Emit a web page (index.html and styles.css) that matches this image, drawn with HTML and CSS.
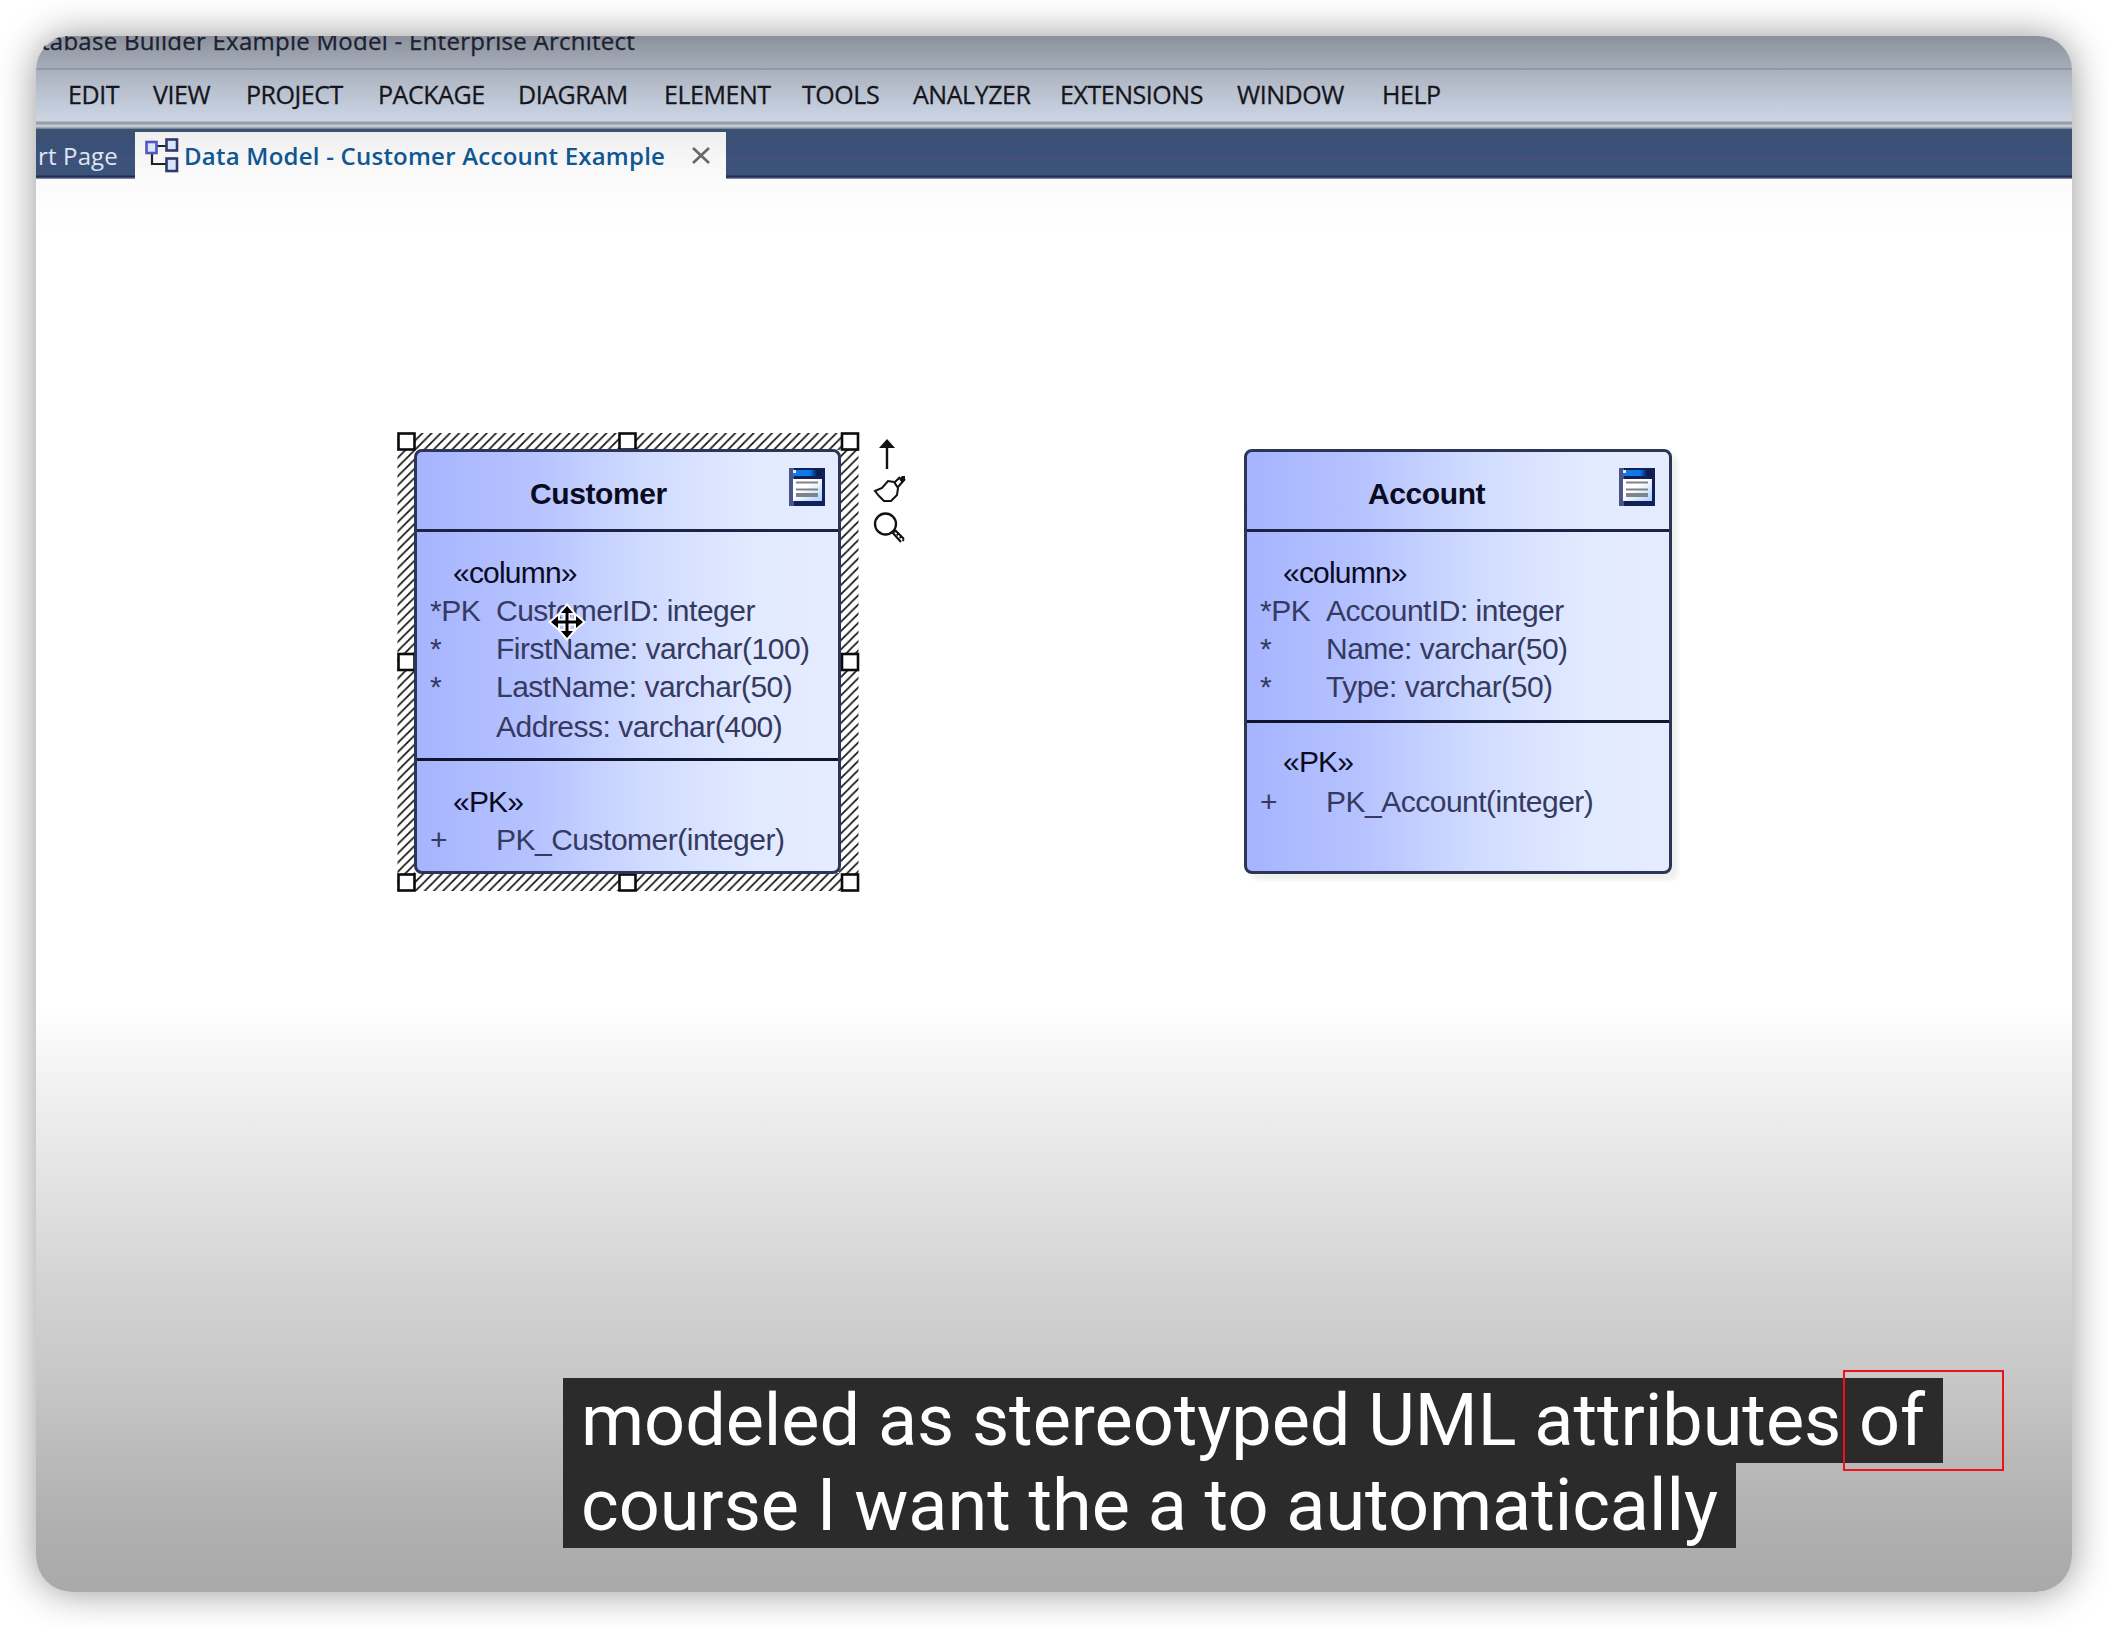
FILE: index.html
```html
<!DOCTYPE html>
<html lang="en">
<head>
<meta charset="utf-8">
<title>Database Builder Example Model - Enterprise Architect</title>
<link rel="stylesheet" href="styles.css">
</head>
<body>
<svg class="defs" width="0" height="0" aria-hidden="true">
  <defs>
    <linearGradient id="bar" x1="0" x2="1" y1="0" y2="0"><stop offset="0" stop-color="#1a78d8"/><stop offset=".6" stop-color="#0a7af0"/><stop offset=".85" stop-color="#0b1c50"/></linearGradient>
    <linearGradient id="sheet" x1="0" x2="1" y1="0" y2="1"><stop offset=".4" stop-color="#fff"/><stop offset="1" stop-color="#a9d0ff"/></linearGradient>
    <pattern id="hatch" width="9.2" height="9.2" patternUnits="userSpaceOnUse"><path d="M-2.3 2.3L2.3-2.3M0 9.2L9.2 0M6.900 11.500L11.500 6.900" stroke="#111" stroke-width="1.700"/></pattern>
    <symbol id="table-icon" viewBox="0 0 36 38">
      <rect width="36" height="38" fill="#12205a"/>
      <rect width="5" height="38" fill="#4b5488"/>
      <rect x="4" y="2" width="28" height="6" fill="url(#bar)"/>
      <rect x="4" y="2" width="3" height="3" fill="#d7ecff"/>
      <rect x="4" y="11" width="29" height="22" fill="url(#sheet)"/>
      <path d="M7 14.500h22M7 21.500h22" stroke="#808488" stroke-width="2"/>
      <path d="M7 27h22" stroke="#808488" stroke-width="4"/>
    </symbol>
  </defs>
</svg>
<main class="frame">
  <header class="titlebar"><span class="title">tabase Builder Example Model - Enterprise Architect</span></header>
  <nav class="menu">
    <span>EDIT</span><span>VIEW</span><span>PROJECT</span><span>PACKAGE</span><span>DIAGRAM</span><span>ELEMENT</span><span>TOOLS</span><span>ANALYZER</span><span>EXTENSIONS</span><span>WINDOW</span><span>HELP</span>
  </nav>
  <div class="tabs">
    <div class="tab start">rt Page</div>
    <div class="tab active">
      <svg class="tab-icon" width="34" height="35" viewBox="0 0 34 35">
        <path d="M11 8h10M7 14v12h14" fill="none" stroke="#222" stroke-width="2.200"/>
        <g fill="#d9e4ff" stroke="#30386c" stroke-width="2.600"><rect x="1.500" y="4" width="10" height="11" stroke="#5058c0"/><rect x="21.500" y="1.500" width="10.500" height="11"/><rect x="21.500" y="20.500" width="10.500" height="12.500"/></g>
      </svg>
      <span class="tab-name">Data Model - Customer Account Example</span>
      <svg class="close" width="20" height="17" viewBox="0 0 20 17"><path d="M2 1l16 15M18 1L2 16" stroke="#666" stroke-width="2.600"/></svg>
    </div>
  </div>
  <section class="canvas">
    <svg class="selection" width="464" height="460" viewBox="0 0 464 460">
      <path fill="url(#hatch)" fill-rule="evenodd" d="M1.500 1H462.500V459H1.500ZM19 18V441H443V18Z"/>
      <g class="handles">
        <rect x="2.500" y="1.500" width="16" height="16"/><rect x="223.500" y="1.500" width="16" height="16"/><rect x="446" y="1.500" width="16" height="16"/>
        <rect x="2.500" y="222" width="16" height="16"/><rect x="446" y="222" width="16" height="16"/>
        <rect x="2.500" y="442.500" width="16" height="16"/><rect x="223.500" y="442.500" width="16" height="16"/><rect x="446" y="442.500" width="16" height="16"/>
      </g>
    </svg>
    <article class="entity customer">
      <h2><span>Customer</span><svg class="entity-icon" width="36" height="38"><use href="#table-icon"/></svg></h2>
      <div class="part columns">
        <div class="stereo">«column»</div>
        <div class="row"><i>*PK</i><span>CustomerID: integer</span></div>
        <div class="row"><i>*</i><span>FirstName: varchar(100)</span></div>
        <div class="row"><i>*</i><span>LastName: varchar(50)</span></div>
        <div class="row last"><i></i><span>Address: varchar(400)</span></div>
      </div>
      <div class="part keys">
        <div class="stereo">«PK»</div>
        <div class="row"><i>+</i><span>PK_Customer(integer)</span></div>
      </div>
    </article>
    <svg class="tools" width="34" height="108" viewBox="0 0 34 108" fill="none" stroke="#111" stroke-width="2">
      <path d="M15 4v27" stroke-width="2.400"/><path d="M15 1l8 9H7z" fill="#111" stroke="none"/>
      <path d="M3 53l7-3 6-7 6 1 4 6-1 7-6 6h-7l-5-5z"/><path d="M22 45l6-6M26 49l7-8"/><path d="M27 41l3-3h3v4l-3 3z" fill="#111" stroke="none"/>
      <circle cx="13.500" cy="86" r="10.500" stroke-width="2.300"/><path d="M20 94l9 10M23 92l9 9"/><path d="M22 93l10 10" stroke-dasharray="2 2"/>
    </svg>
    <svg class="cursor" width="38" height="38" viewBox="-19 -19 38 38">
      <path d="M0-16L6-9H1.500V-1.500H9V-6L16 0 9 6V1.500H1.500V9H6L0 16-6 9H-1.500V1.500H-9V6L-16 0-9-6V-1.500H-1.500V-9H-6Z" fill="#000" stroke="#fff" stroke-width="4" paint-order="stroke"/>
    </svg>
    <article class="entity account">
      <h2><span>Account</span><svg class="entity-icon" width="36" height="38"><use href="#table-icon"/></svg></h2>
      <div class="part columns">
        <div class="stereo">«column»</div>
        <div class="row"><i>*PK</i><span>AccountID: integer</span></div>
        <div class="row"><i>*</i><span>Name: varchar(50)</span></div>
        <div class="row"><i>*</i><span>Type: varchar(50)</span></div>
      </div>
      <div class="part keys">
        <div class="stereo">«PK»</div>
        <div class="row"><i>+</i><span>PK_Account(integer)</span></div>
      </div>
    </article>
  </section>
  <div class="shade"></div>
  <div class="caption"><span>modeled as stereotyped UML attributes of</span><span>course I want the a to automatically</span></div>
  <div class="marker"></div>
</main>
</body>
</html>
```
FILE: styles.css
```css
* { box-sizing: border-box; }
body { margin: 0; padding: 36px; height: 1628px; background: #fff; overflow: hidden; }
.defs { position: absolute; }
.frame {
  position: relative; display: flex; flex-direction: column;
  width: 2036px; height: 1556px; border-radius: 36px; background: #fff;
  box-shadow: 0 0 38px rgba(0, 0, 0, .42);
  font-family: "Open Sans", "Noto Sans", sans-serif; white-space: nowrap;
}
.titlebar {
  height: 34px; flex: none; overflow: hidden; padding-left: 5px;
  border-radius: 36px 36px 0 0; border-bottom: 2px solid #9399a7;
  background: linear-gradient(#8b919c, #a6adba);
}
.title { display: block; margin-top: -12px; font-size: 24px; line-height: 34px; letter-spacing: .26px; color: #1d2030; -webkit-text-stroke: .3px; }
.menu {
  height: 59px; flex: none; display: grid; padding: 6px 0 0 32px;
  grid-template-columns: 85px 93px 132px 140px 146px 138px 111px 147px 177px 145px 80px;
  font-size: 25px; line-height: 36px; letter-spacing: -.45px; color: #15161c; -webkit-text-stroke: .3px;
  background: linear-gradient(#a9b1be, #bac1cf 22px, #c3cddd 38px, #cfd3e1 51px, #979ca6 52px, #979ca6 54px, #c2cbd4 55px, #c2cbd4 57px, #7d8896 58px);
}
.tabs {
  height: 50px; flex: none; display: flex; align-items: flex-end;
  background: linear-gradient(#3a5273, #3c4f74 12px, #39527a 24px, #43507c 30px, #3b5379 36px, #3c5279 46px, #1f2d55 47px, #1f2d55 48px, #a0a4b8 50px);
}
.tab { display: flex; align-items: center; height: 47px; font-size: 24px; }
.start { width: 99px; padding-left: 2px; letter-spacing: .15px; color: #dfe6f2; }
.active { width: 591px; padding-left: 10px; background: linear-gradient(#efefef, #fbfbfb); color: #0f5793; }
.tab-icon { flex: none; margin-right: 5px; }
.tab-name { width: 505px; font-weight: 600; letter-spacing: .23px; }
.close { margin-left: 2px; }
.canvas { position: relative; flex: 1; border-radius: 0 0 36px 36px; background: linear-gradient(#fbfbfb, #fff 50px); font-family: "Liberation Sans", Arial, sans-serif; }
.selection { position: absolute; left: 360px; top: 253px; }
.handles rect { fill: #fff; stroke: #0b0b0b; stroke-width: 2.6; }
.entity {
  position: absolute; top: 270px; height: 425px; border: 3px solid #2d3556; border-radius: 8px;
  background: linear-gradient(90deg, #a6b4ff, #b6c3ff 28%, #cfdaff 53%, #e2eaff 80%, #e5ecff);
  font-size: 30px; letter-spacing: -.5px; color: #363a60;
}
.customer { left: 378px; width: 427px; }
.account { left: 1208px; width: 428px; box-shadow: 6px 6px 4px #eef1ec; }
.entity h2 { position: relative; height: 80px; margin: 0; padding-top: 25px; border-bottom: 3px solid #1c2345; font-size: 30px; line-height: 34px; letter-spacing: -.4px; color: #0a0b20; }
.customer h2 { padding-left: 113px; }
.account h2 { padding-left: 121px; }
.entity-icon { position: absolute; right: 13px; top: 16px; }
.account .entity-icon { right: 14px; }
.part { padding: 22px 0 0 13px; }
.columns { border-bottom: 3px solid #10152e; }
.customer .columns { height: 229px; }
.account .columns { height: 191px; }
.account .keys { padding-top: 20px; }
.account .keys .stereo { height: 40px; }
.stereo { height: 38px; padding-left: 23px; line-height: 38px; letter-spacing: -.8px; color: #0a0b20; }
.row { display: flex; height: 38px; line-height: 38px; }
.row i { width: 66px; font-style: normal; }
.last { padding-top: 2px; }
.tools { position: absolute; left: 836px; top: 259px; }
.cursor { position: absolute; left: 512px; top: 424px; }
.shade {
  position: absolute; left: 0; right: 0; top: 974px; bottom: 0; border-radius: 0 0 36px 36px;
  background: linear-gradient(rgba(0,0,0,0), rgba(0,0,0,.05) 70px, rgba(0,0,0,.08) 115px, rgba(0,0,0,.12) 190px, rgba(0,0,0,.175) 280px, rgba(0,0,0,.22) 370px, rgba(0,0,0,.268) 440px, rgba(0,0,0,.315) 520px, rgba(0,0,0,.337));
}
.caption { position: absolute; left: 527px; top: 1342px; display: flex; flex-direction: column; align-items: flex-start; font: 72px/85px Roboto, sans-serif; letter-spacing: -.03px; color: #fff; }
.caption span { padding: 0 18px; background: #2b2b2b; }
.marker { position: absolute; left: 1807px; top: 1334px; width: 161px; height: 101px; border: 2px solid #f01018; }
```
